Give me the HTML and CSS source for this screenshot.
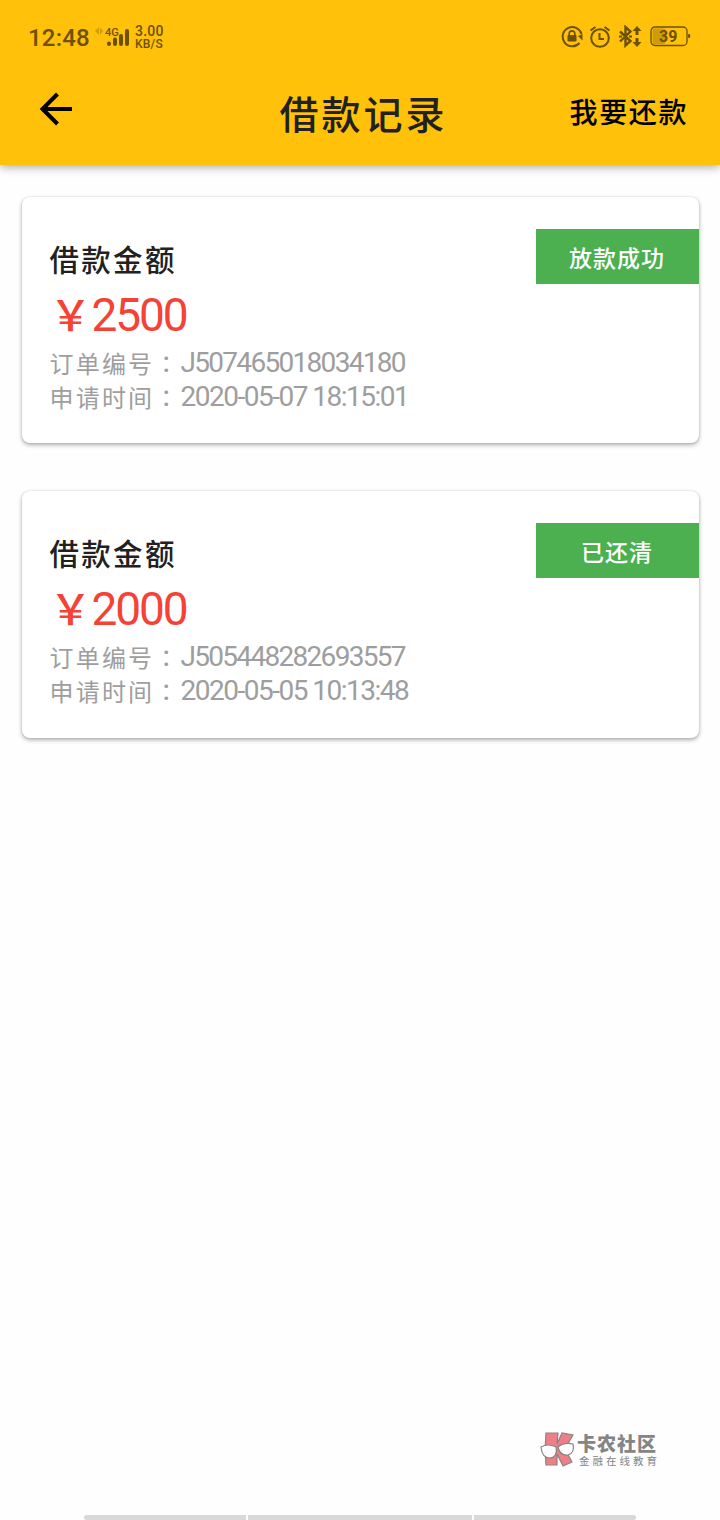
FILE: index.html
```html
<!DOCTYPE html>
<html lang="zh-CN">
<head>
    <meta charset="utf-8">
    <title>借款记录</title>
    <link rel="stylesheet" href="styles.css">
</head>
<body>
    <header class="header">
        <div class="status-bar">
            <span class="time">12:48</span>
            <svg class="signal" width="36" height="24" viewBox="0 0 36 24">
                <path d="M5 2L1 6l4 4zM6 2l3 4-3 4z" fill="#6b5100" opacity=".3"/>
                <text class="network" x="11" y="11">4G</text>
                <path d="M15 18.5v.5M21 14.5v4.500M27 11v8M33 6v13" stroke="#6b5100" stroke-width="4" stroke-linecap="round"/>
            </svg>
            <div class="speed"><span class="rate">3.00</span><span>KB/S</span></div>
            <div class="status-icons">
                <svg class="lock" width="23" height="23" viewBox="0 0 23 23" fill="none" stroke="#6b5100" stroke-width="2">
                    <path d="M18.500 18A9.600 9.600 0 1 1 20.500 9"/>
                    <path d="M17 11l4.500 4.500V9z" fill="#6b5100" stroke="none"/>
                    <rect x="6.500" y="10" width="9" height="6.500" rx="1" fill="#6b5100" stroke="none"/>
                    <path d="M8.200 11V8.700a2.800 2.800 0 0 1 5.600 0V11" stroke-width="1.6"/>
                </svg>
                <svg class="alarm" width="22" height="23" viewBox="0 0 22 23" fill="none" stroke="#6b5100" stroke-width="2">
                    <circle cx="11" cy="13" r="8.8"/>
                    <path d="M10.5 8v6H15M1.500 5.500l5-3.500M15.500 2l5 3.500"/>
                </svg>
                <svg class="bluetooth" width="24" height="23" viewBox="0 0 24 23" fill="none" stroke="#6b5100" stroke-width="2.4">
                    <path d="M2 6.5l10.500 9.500-5 4.500V2l5 4.500L2 16.500"/>
                    <path d="M19 5v5M19 13v5" stroke-width="3"/>
                    <path d="M14.500 6L19 1l4.500 5zM14.500 17l4.500 5 4.500-5z" fill="#6b5100" stroke="none"/>
                    <path d="M1 11.500h3M11 11.500h3" stroke-width="2"/>
                </svg>
                <svg class="battery" width="41" height="21" viewBox="0 0 41 21">
                    <rect x="1" y="1" width="36" height="18.500" rx="4" fill="none" stroke="#6b5100" stroke-width="1.3"/>
                    <rect x="2.500" y="2.500" width="13" height="15.500" rx="2" fill="#cf9c08"/>
                    <rect x="38" y="8" width="2.200" height="4" rx="1" fill="#6b5100"/>
                    <text class="percent" x="9" y="16">39</text>
                </svg>
            </div>
        </div>
        <nav class="nav-bar">
            <svg class="back" width="34" height="34" viewBox="0 0 34 34" fill="none" stroke="#000" stroke-width="4">
                <path d="M33 17H4M18.500 2L3.500 17l15 15"/>
            </svg>
            <h1 class="title">借款记录</h1>
            <a class="repay">我要还款</a>
        </nav>
    </header>

    <main class="records">
        <section class="card">
            <div class="info">
                <h2 class="label">借款金额</h2>
                <p class="amount">￥<span class="amount-value">2500</span></p>
                <p class="detail">订单编号<span class="colon" lang="zh-TW">：</span><span class="value order">J507465018034180</span></p>
                <p class="detail">申请时间<span class="colon" lang="zh-TW">：</span><span class="value">2020-05-07 18:15:01</span></p>
            </div>
            <span class="badge">放款成功</span>
        </section>
        <section class="card">
            <div class="info">
                <h2 class="label">借款金额</h2>
                <p class="amount">￥<span class="amount-value">2000</span></p>
                <p class="detail">订单编号<span class="colon" lang="zh-TW">：</span><span class="value order">J505448282693557</span></p>
                <p class="detail">申请时间<span class="colon" lang="zh-TW">：</span><span class="value">2020-05-05 10:13:48</span></p>
            </div>
            <span class="badge">已还清</span>
        </section>
    </main>

    <footer class="footer">
        <div class="brand">
            <svg class="brand-logo" width="36" height="36" viewBox="0 0 36 36" stroke="#8a8585" stroke-width="1.200">
                <path d="M6 1h12l-1 11 5-11 11 2-8 14 7 13-9 4-6-12v11H6l-1-15z" fill="#ee7f86"/>
                <path d="M1 15q7-4 15 0 2 10-6 11-8 0-9-11zM18 15q6-5 15-3 2 9-5 11-8 1-10-8z" fill="#fff"/>
            </svg>
            <div class="brand-text">
                <span class="brand-name">卡农社区</span>
                <span class="brand-slogan">金融在线教育</span>
            </div>
        </div>
        <div class="gesture-bar">
            <span class="gesture-side"></span>
            <span class="gesture-home"></span>
            <span class="gesture-side"></span>
        </div>
    </footer>
</body>
</html>
```

FILE: styles.css
```css
* {
    box-sizing: border-box;
}
body {
    margin: 0;
    height: 1520px;
    display: flex;
    flex-direction: column;
    overflow: hidden;
    background: #fefefe;
    font-family: "Noto Sans CJK SC", sans-serif;
    color: #212121;
}
h1, h2, p {
    margin: 0;
    font-weight: 400;
}
svg {
    display: block;
    flex: none;
}
.header {
    height: 165px;
    flex: none;
    background: #ffc10a;
    box-shadow: 0 2px 9px rgba(0, 0, 0, 0.35);
}
.status-bar {
    height: 73px;
    display: flex;
    align-items: center;
    padding: 0 29px 0 28px;
    font-family: Roboto, sans-serif;
    font-weight: 500;
    color: #6b5100;
}
.time {
    width: 66px;
    padding-top: 3px;
    font-size: 24px;
    letter-spacing: 0.2px;
}
.network {
    font-family: Roboto, sans-serif;
    font-size: 11px;
    fill: #6b5100;
}
.speed {
    display: flex;
    flex-direction: column;
    margin-left: 5px;
    font-size: 12px;
    line-height: 12px;
    padding-top: 1px;
    letter-spacing: 0.2px;
}
.rate {
    font-size: 14px;
    line-height: 13px;
}
.status-icons {
    display: flex;
    align-items: center;
    margin-left: auto;
}
.alarm {
    margin-left: 5px;
}
.bluetooth {
    margin-left: 7px;
}
.battery {
    margin-left: 8px;
}
.percent {
    font-family: Roboto, sans-serif;
    font-size: 16px;
    font-weight: 700;
    fill: #6b5100;
}
.nav-bar {
    height: 80px;
    display: grid;
    grid-template-columns: 160px 1fr 160px;
    align-items: center;
    padding: 0 32px 0 39px;
}
.back {
    margin-top: -8px;
}
.title {
    font-size: 39px;
    font-weight: 500;
    line-height: 78px;
    margin-top: -2px;
    letter-spacing: 3px;
    text-align: center;
}
.repay {
    margin-top: -4px;
    color: #000;
    font-size: 28px;
    font-weight: 500;
    letter-spacing: 1.6px;
    text-align: right;
    white-space: nowrap;
}
.records {
    display: flex;
    flex-direction: column;
    gap: 48px;
    padding: 32px 21.500px 0 21.500px;
}
.card {
    height: 246.300px;
    display: flex;
    justify-content: space-between;
    align-items: flex-start;
    background: #fff;
    border-radius: 8px;
    box-shadow: 0 2px 4px rgba(0, 0, 0, 0.32), 0 0 2px rgba(0, 0, 0, 0.12);
}
.info {
    padding: 38px 0 0 28px;
}
.label {
    height: 49px;
    font-size: 29.500px;
    font-weight: 500;
    line-height: 46px;
    letter-spacing: 2.300px;
}
.amount {
    display: flex;
    height: 62px;
    line-height: 58px;
    font-size: 42px;
    font-weight: 500;
    color: #f44336;
}
.amount-value {
    font-family: Roboto, sans-serif;
    font-weight: 400;
    font-size: 46px;
    letter-spacing: -2.100px;
    line-height: 62px;
}
.detail {
    display: flex;
    height: 34px;
    line-height: 34px;
    font-size: 24px;
    letter-spacing: 2.200px;
    color: #9e9e9e;
}
.colon {
    font-family: "Noto Sans CJK TC", sans-serif;
}
.value {
    font-family: Roboto, sans-serif;
    font-size: 28px;
    letter-spacing: -1.500px;
    line-height: 33px;
}
.order {
    letter-spacing: -1.700px;
}
.badge {
    width: 163px;
    height: 55px;
    margin-top: 32px;
    background: #4caf50;
    color: #fff;
    font-size: 23px;
    font-weight: 500;
    letter-spacing: 1px;
    line-height: 57px;
    text-align: center;
}
.footer {
    margin-top: auto;
}
.brand {
    display: flex;
    width: 180px;
    margin: 0 0 47px 540px;
    gap: 1px;
}
.brand-text {
    display: flex;
    flex-direction: column;
    color: #858585;
}
.brand-name {
    font-size: 19px;
    font-weight: 900;
    line-height: 21px;
    letter-spacing: 1px;
}
.brand-slogan {
    padding-left: 2px;
    font-size: 10.500px;
    line-height: 15px;
    letter-spacing: 3px;
}
.gesture-bar {
    display: flex;
    gap: 2px;
    height: 5px;
    padding: 0 84px;
}
.gesture-side {
    width: 162px;
    background: #d8d8d8;
}
.gesture-side:first-child {
    border-radius: 3px 0 0 3px;
}
.gesture-side:last-child {
    border-radius: 0 3px 3px 0;
}
.gesture-home {
    flex: 1;
    background: #d8d8d8;
}
```
